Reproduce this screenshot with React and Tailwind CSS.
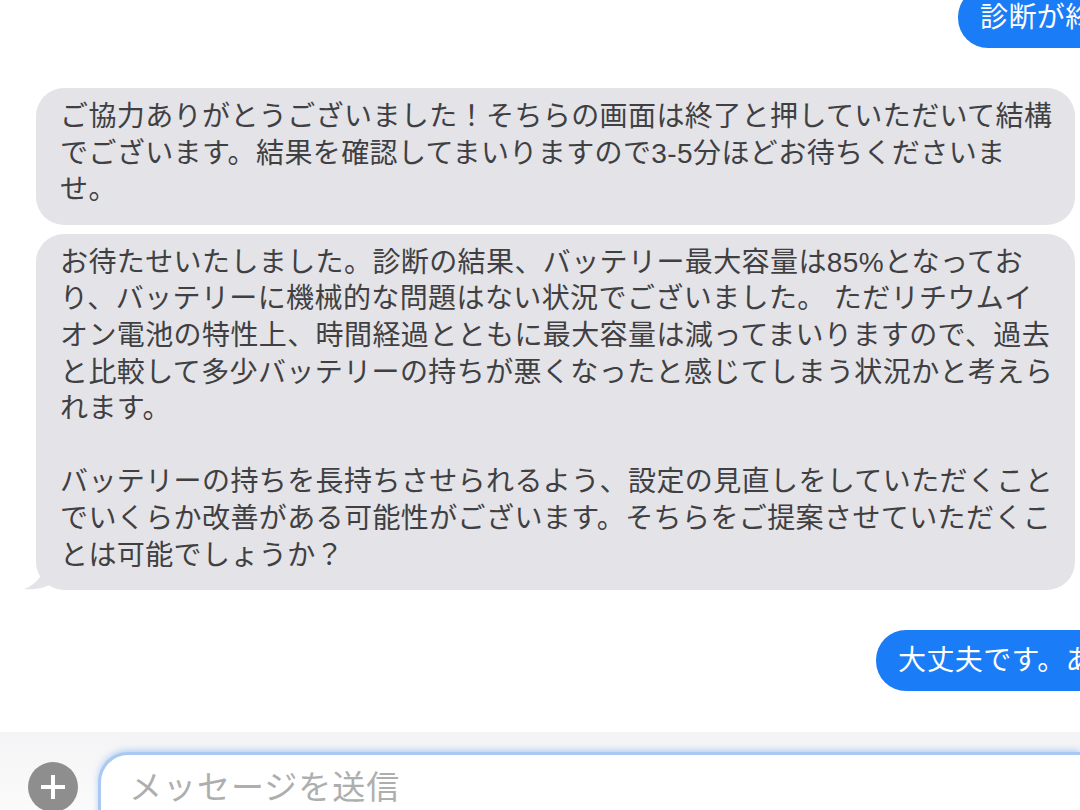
import React from "react";

const font = { fontFamily: '"Liberation Sans", "Noto Sans CJK JP", sans-serif' };

function GrayBubble({ lines, tail }) {
  return (
    <div className="relative ml-[36px] w-[1039px]">
      <div className="rounded-[28px] bg-[#e3e3e8] pl-[24px] pr-[16px] pt-[11px] pb-[16px] text-[28px] leading-[36.6px] text-[#404042] tracking-[0.4px]">
        {lines.map((l, i) => (
          <div key={i} className="whitespace-nowrap h-[36.6px]">
            {l}
          </div>
        ))}
      </div>
      {tail && (
        <svg className="absolute left-[-12px] bottom-0" width="40" height="30" viewBox="0 0 40 30">
          <path d="M20 0 C20 14 14 24 0 29 C12 30 22 28 30 22 L40 22 L40 0 Z" fill="#e3e3e8" />
        </svg>
      )}
    </div>
  );
}

function BlueBubble({ text, left, className }) {
  return (
    <div className={"flex " + className}>
      <div
        className="shrink-0 h-[61px] rounded-l-[30px] bg-[#1a7cf6] text-white text-[28px] leading-[61px] pl-[22px] whitespace-nowrap tracking-[0.4px]"
        style={{ marginLeft: left, width: 1080 - left + 40 }}
      >
        {text}
      </div>
    </div>
  );
}

export default function App() {
  return (
    <div className="w-[1080px] h-[810px] overflow-hidden bg-white flex flex-col" style={font}>
      <div className="flex-1 flex flex-col overflow-hidden">
        <BlueBubble text="診断が終了しました" left={958} className="mt-[-13px]" />
        <div className="mt-[40px]">
          <GrayBubble
            lines={[
              "ご協力ありがとうございました！そちらの画面は終了と押していただいて結構",
              "でございます。結果を確認してまいりますので3-5分ほどお待ちくださいま",
              "せ。",
            ]}
          />
        </div>
        <div className="mt-[9px]">
          <GrayBubble
            tail
            lines={[
              "お待たせいたしました。診断の結果、バッテリー最大容量は85%となってお",
              "り、バッテリーに機械的な問題はない状況でございました。 ただリチウムイ",
              "オン電池の特性上、時間経過とともに最大容量は減ってまいりますので、過去",
              "と比較して多少バッテリーの持ちが悪くなったと感じてしまう状況かと考えら",
              "れます。",
              "",
              "バッテリーの持ちを長持ちさせられるよう、設定の見直しをしていただくこと",
              "でいくらか改善がある可能性がございます。そちらをご提案させていただくこ",
              "とは可能でしょうか？",
            ]}
          />
        </div>
        <BlueBubble text="大丈夫です。ありがとうございます" left={876} className="mt-[40px]" />
      </div>
      <div className="h-[78px] shrink-0 bg-gradient-to-b from-[#f4f4f6] to-[#fbfbfb] flex items-start pt-[20px]">
        <div className="ml-[28px] mt-[10px] w-[50px] h-[50px] rounded-full bg-[#8e8e8e] flex items-center justify-center shrink-0">
          <svg width="30" height="30" viewBox="0 0 30 30">
            <path d="M15 3 V27 M3 15 H27" stroke="white" strokeWidth="4" strokeLinecap="butt" />
          </svg>
        </div>
        <div className="ml-[20px] flex-1 h-[70px] rounded-tl-[30px] bg-white border-t-[3px] border-l-[3px] border-[#a9c9f2] shadow-[0_-2px_6px_rgba(120,170,240,0.5)] pl-[28px] pt-[8px] text-[33px] tracking-[1px] text-[#aeaeae] whitespace-nowrap">
          メッセージを送信
        </div>
      </div>
    </div>
  );
}
